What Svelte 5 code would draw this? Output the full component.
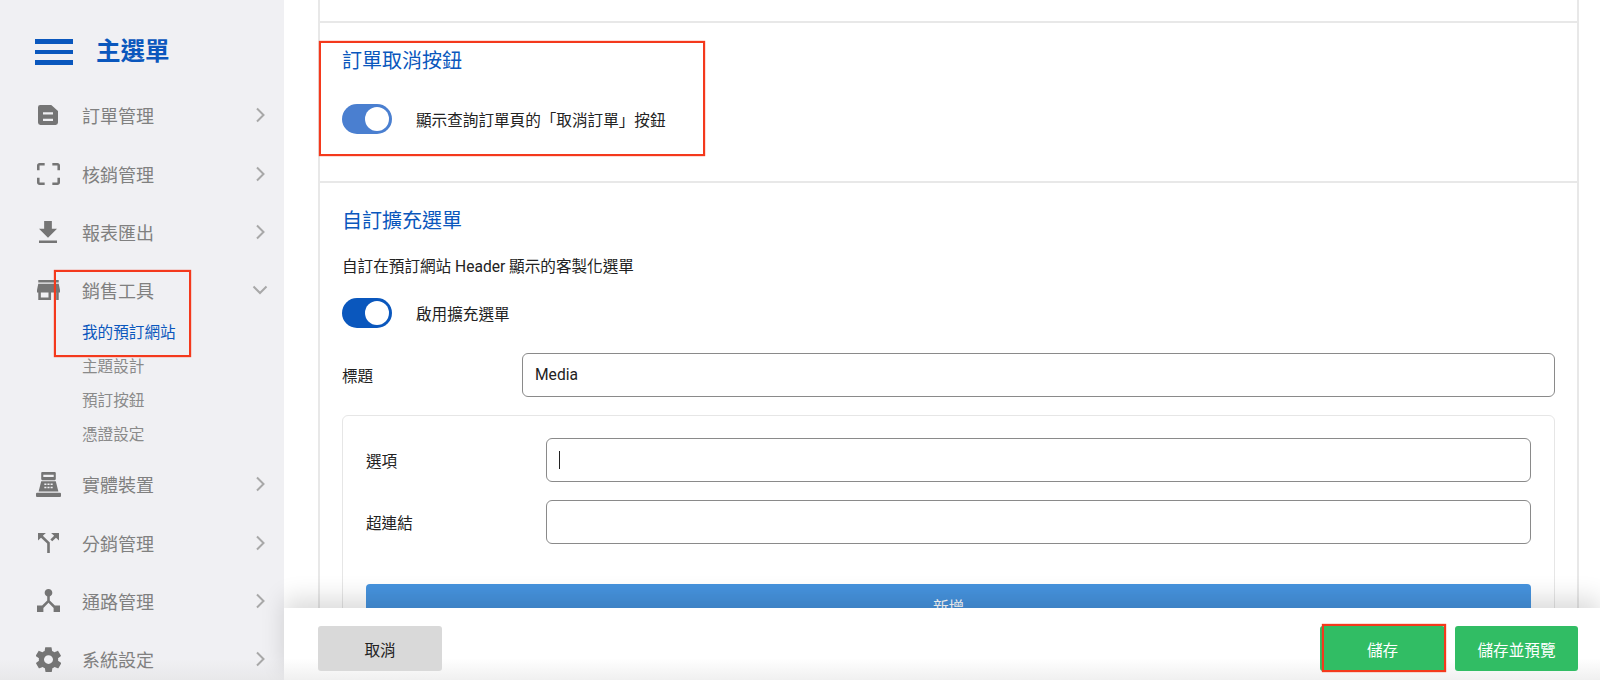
<script>
  const menu = [
    { label: '訂單管理', icon: 'doc' },
    { label: '核銷管理', icon: 'scan' },
    { label: '報表匯出', icon: 'download' },
    {
      label: '銷售工具',
      icon: 'store',
      open: true,
      children: ['我的預訂網站', '主題設計', '預訂按鈕', '憑證設定']
    },
    { label: '實體裝置', icon: 'pos' },
    { label: '分銷管理', icon: 'split' },
    { label: '通路管理', icon: 'hub' },
    { label: '系統設定', icon: 'gear' }
  ];

  const icons = {
    doc: {
      vb: '2.8 2.8 18.4 18.4', w: 20, h: 20,
      d: 'M4.800 2.800H15l6.200 5.500V19a2.200 2.200 0 0 1-2.200 2.200H5A2.200 2.200 0 0 1 2.800 19V4.800a2 2 0 0 1 2-2zM7.400 9.500v2h9.200v-2zM7.400 15.500v2h9.200v-2z'
    },
    scan: {
      vb: '3 3 18 18', w: 23, h: 22,
      d: 'M3 5v4h2V5h4V3H5c-1.100 0-2 .9-2 2zm2 10H3v4c0 1.100.9 2 2 2h4v-2H5v-4zm14 4h-4v2h4c1.100 0 2-.9 2-2v-4h-2v4zm0-16h-4v2h4v4h2V5c0-1.100-.9-2-2-2z'
    },
    download: {
      vb: '5 3 14 17', w: 18, h: 22,
      d: 'M19 9h-4V3H9v6H5l7 7 7-7zM5 18v2h14v-2H5z'
    },
    store: {
      vb: '3 4 18 16', w: 23, h: 20,
      d: 'M20 4H4v2h16V4zm1 10v-2l-1-5H4l-1 5v2h1v6h10v-6h4v6h2v-6h1zm-9 4H6v-4h6v4z'
    },
    pos: {
      vb: '1 1 24 23', w: 25, h: 25,
      d: 'M7 1h12a1 1 0 0 1 1 1v5.500a1 1 0 0 1-1 1H7a1 1 0 0 1-1-1V2a1 1 0 0 1 1-1zm1 2.500v2h10v-2H8zM6 9.500h14l2.500 9.500H3.500L6 9.500zm3 2v1.500h2v-1.500H9zm3 0v1.500h2v-1.500h-2zm3 0v1.500h2v-1.500h-2zm-6 3v1.500h2v-1.500H9zm3 0v1.500h2v-1.500h-2zm3 0v1.500h2v-1.500h-2zM2 20h22a1 1 0 0 1 1 1v2a1 1 0 0 1-1 1H2a1 1 0 0 1-1-1v-2a1 1 0 0 1 1-1z'
    },
    split: {
      vb: '4 4 16 16', w: 21, h: 20,
      d: 'M14 4l2.290 2.290-2.880 2.880 1.420 1.420 2.880-2.880L20 10V4zm-4 0H4v6l2.290-2.290 4.710 4.700V20h2v-8.410l-5.290-5.300z'
    },
    hub: {
      vb: '3 3 18 18', w: 23, h: 23,
      d: 'M17 16l-4-4V8.820C14.160 8.400 15 7.300 15 6c0-1.660-1.340-3-3-3S9 4.340 9 6c0 1.300.840 2.400 2 2.820V12l-4 4H3v5h5v-3.050l4-4.200 4 4.200V21h5v-5h-4z'
    },
    gear: {
      vb: '2.3 2 19.400 20', w: 25, h: 25,
      d: 'M19.400 13c.1-.3.100-.7.100-1s0-.7-.1-1l2.100-1.600c.2-.2.200-.4.100-.6l-2-3.500c-.1-.2-.4-.3-.6-.2l-2.500 1c-.5-.4-1.100-.7-1.700-1l-.4-2.600c0-.3-.2-.4-.5-.4h-4c-.3 0-.5.100-.5.400l-.4 2.600c-.6.300-1.200.6-1.700 1l-2.500-1c-.2-.1-.5 0-.6.200l-2 3.500c-.1.200-.1.400.1.600L4.600 11c-.1.300-.1.700-.1 1s0 .7.100 1l-2.100 1.600c-.2.200-.2.400-.1.600l2 3.500c.1.200.4.300.6.200l2.500-1c.5.400 1.100.7 1.700 1l.4 2.600c0 .3.200.4.500.4h4c.3 0 .5-.1.500-.4l.4-2.600c.6-.3 1.200-.6 1.700-1l2.500 1c.2.100.5 0 .6-.2l2-3.500c.1-.2.100-.4-.1-.6L19.400 13zM12 15.500a3.500 3.500 0 1 1 0-7 3.500 3.500 0 0 1 0 7z'
    }
  };
</script>

<div class="page">
  <aside class="sidebar">
    <div class="brand">
      <span class="burger"><i></i><i></i><i></i></span>
      <span class="brand-title">主選單</span>
    </div>
    <nav>
      {#each menu as item}
        <div class="item">
          <span class="icon">
            <svg viewBox={icons[item.icon].vb} width={icons[item.icon].w} height={icons[item.icon].h} preserveAspectRatio="none">
              <path fill="#757575" fill-rule="evenodd" d={icons[item.icon].d} />
            </svg>
          </span>
          <span class="label">{item.label}</span>
          <svg class="chev" viewBox="0 0 16 16" width="16" height="16">
            {#if item.open}
              <path d="M1.500 4.500L8 11l6.500-6.500" />
            {:else}
              <path d="M5 1.500L11.500 8 5 14.500" />
            {/if}
          </svg>
        </div>
        {#if item.children}
          <div class="sub">
            {#each item.children as child, i}
              <div class="sub-item" class:active={i === 0}>{child}</div>
            {/each}
          </div>
        {/if}
      {/each}
    </nav>
  </aside>

  <main class="main">
    <div class="card">
      <section class="sec-top"></section>

      <section class="sec-cancel">
        <h3>訂單取消按鈕</h3>
        <div class="switch-row">
          <span class="switch faded"><i></i></span>
          <span>顯示查詢訂單頁的「取消訂單」按鈕</span>
        </div>
      </section>

      <section class="sec-menu">
        <h3>自訂擴充選單</h3>
        <p>自訂在預訂網站 Header 顯示的客製化選單</p>
        <div class="switch-row">
          <span class="switch"><i></i></span>
          <span>啟用擴充選單</span>
        </div>
        <div class="field title-field">
          <span class="field-label">標題</span>
          <div class="input">Media</div>
        </div>
        <div class="box">
          <div class="field">
            <span class="field-label">選項</span>
            <div class="input"><b class="caret"></b></div>
          </div>
          <div class="field">
            <span class="field-label">超連結</span>
            <div class="input"></div>
          </div>
          <button class="add">新增</button>
        </div>
      </section>
    </div>

    <footer class="footer">
      <button class="btn cancel">取消</button>
      <div class="right">
        <button class="btn save first">儲存</button>
        <button class="btn save">儲存並預覽</button>
      </div>
    </footer>

    <span class="mark mark-cancel"></span>
    <span class="mark mark-save"></span>
  </main>

  <span class="mark mark-nav"></span>
</div>

<style>
  :global(body) {
    margin: 0;
    background: #fff;
    font-family: Roboto, "Noto Sans CJK TC", sans-serif;
  }

  .page {
    display: flex;
    width: 1600px;
    height: 680px;
    overflow: hidden;
    position: relative;
  }

  .sidebar {
    width: 284px;
    flex: none;
    background: linear-gradient(#f0f0f3 97%, #e8e8ea);
    padding: 36px 0 0 35px;
    box-sizing: border-box;
  }

  .brand {
    display: flex;
    align-items: center;
    gap: 23px;
    height: 32px;
    margin-bottom: 18px;
  }

  .burger {
    width: 38px;
    display: flex;
    flex-direction: column;
    gap: 6px;
  }

  .burger i {
    height: 4.500px;
    background: #0a57bd;
  }

  .brand-title {
    color: #0a57bd;
    font-size: 24.500px;
    font-weight: 700;
    line-height: 32px;
  }

  .item {
    display: flex;
    align-items: center;
    height: 58.400px;
    color: #808080;
    font-size: 18px;
  }

  .icon {
    width: 26px;
    height: 26px;
    display: flex;
    align-items: center;
    justify-content: center;
    margin-right: 21px;
  }

  .label {
    flex: 1;
  }

  .chev {
    margin-right: 16px;
  }

  .chev path {
    fill: none;
    stroke: #a8a8a8;
    stroke-width: 2;
  }

  .sub {
    padding: 0 0 2.900px 47px;
    margin-top: -3.500px;
  }

  .sub-item {
    height: 34px;
    line-height: 34px;
    font-size: 15.600px;
    color: #8a8a8a;
  }

  .sub-item.active {
    color: #0a57bd;
  }

  .main {
    flex: 1;
    position: relative;
    padding: 0 21px 0 34px;
    min-width: 0;
  }

  .card {
    border-left: 2px solid #e8e8e8;
    border-right: 2px solid #e8e8e8;
    height: 680px;
  }

  .card h3 {
    margin: 0;
    font-size: 20px;
    font-weight: 400;
    line-height: 26px;
    color: #0a57bd;
  }

  .card section {
    border-bottom: 2px solid #e8e8e8;
    padding: 0 22px;
  }

  .card section.sec-top {
    height: 21px;
  }

  .card section.sec-cancel {
    height: 133px;
    padding-top: 25px;
  }

  .sec-cancel .switch-row {
    margin-top: 30px;
  }

  .card section.sec-menu {
    border-bottom: 0;
    padding-top: 25px;
  }

  .sec-menu p {
    margin: 21px 0 0;
    font-size: 15.600px;
    line-height: 24px;
    color: #222;
  }

  .sec-menu .switch-row {
    margin-top: 19px;
  }

  .switch-row {
    display: flex;
    align-items: center;
    gap: 24px;
    font-size: 15.600px;
    color: #222;
  }

  .switch {
    width: 50px;
    height: 30px;
    border-radius: 15px;
    background: #0a57bd;
    display: flex;
    align-items: center;
    justify-content: flex-end;
    padding-right: 3px;
    box-sizing: border-box;
  }

  .switch.faded {
    background: #4a7fd0;
  }

  .switch i {
    width: 24px;
    height: 24px;
    border-radius: 50%;
    background: #fff;
  }

  .field {
    display: flex;
    align-items: center;
    color: #222;
    font-size: 15.600px;
  }

  .field-label {
    width: 180px;
    flex: none;
  }

  .title-field {
    margin-top: 25px;
  }

  .input {
    flex: 1;
    height: 44px;
    box-sizing: border-box;
    border: 1px solid #8a8a8a;
    border-radius: 6px;
    padding: 0 12px;
    display: flex;
    align-items: center;
    font-size: 15.600px;
  }

  .caret {
    width: 1px;
    height: 18px;
    background: #222;
  }

  .box {
    margin-top: 18px;
    border: 1px solid #e6e6e6;
    border-radius: 6px;
    padding: 22px 23px 0;
    display: flex;
    flex-direction: column;
    gap: 18px;
  }

  .add {
    margin-top: 22px;
    height: 44px;
    border: 0;
    border-radius: 4px;
    background: #4693de;
    color: #fff;
    font: inherit;
    font-size: 15.600px;
  }

  .footer {
    position: absolute;
    left: 0;
    right: 0;
    bottom: 0;
    height: 72px;
    box-sizing: border-box;
    background: linear-gradient(#fff 70%, #f0f0f0);
    box-shadow: 0 -10px 24px rgba(0, 0, 0, 0.14);
    padding: 18px 22px 9px 34px;
    display: flex;
    justify-content: space-between;
  }

  .right {
    display: flex;
    gap: 10px;
  }

  .btn {
    width: 123px;
    height: 45px;
    border: 0;
    border-radius: 3px;
    font: inherit;
    font-size: 15.600px;
  }

  .cancel {
    width: 124px;
    background: #d9d9d9;
    color: #222;
  }

  .save {
    background: #31bd64;
    color: #fff;
  }

  .save.first {
    width: 125px;
  }

  .mark {
    position: absolute;
    border: 2px solid #f4391c;
    box-shadow: 0 0 1px #f4391c;
    box-sizing: border-box;
    pointer-events: none;
  }

  .mark-nav {
    left: 54px;
    top: 270px;
    width: 137px;
    height: 87px;
  }

  .mark-cancel {
    left: 35px;
    top: 41px;
    width: 386px;
    height: 115px;
  }

  .mark-save {
    left: 1038px;
    top: 624px;
    width: 124px;
    height: 48px;
  }
</style>
